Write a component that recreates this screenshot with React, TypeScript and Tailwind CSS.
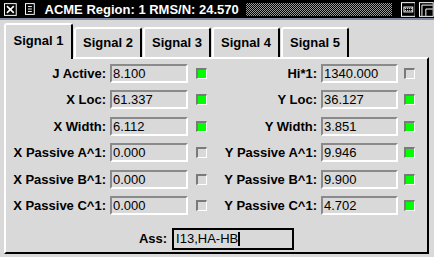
const leftRows = [
  { label: 'J Active:', value: '8.100', on: true },
  { label: 'X Loc:', value: '61.337', on: true },
  { label: 'X Width:', value: '6.112', on: true },
  { label: 'X Passive A^1:', value: '0.000', on: false },
  { label: 'X Passive B^1:', value: '0.000', on: false },
  { label: 'X Passive C^1:', value: '0.000', on: false },
];

const rightRows = [
  { label: 'Hi*1:', value: '1340.000', on: false },
  { label: 'Y Loc:', value: '36.127', on: true },
  { label: 'Y Width:', value: '3.851', on: true },
  { label: 'Y Passive A^1:', value: '9.946', on: true },
  { label: 'Y Passive B^1:', value: '9.900', on: true },
  { label: 'Y Passive C^1:', value: '4.702', on: true },
];

const tabs = ['Signal 1', 'Signal 2', 'Signal 3', 'Signal 4', 'Signal 5'];

const Check = ({ on }: { on: boolean }) => (
  <div className="w-[11px] h-[11px] border-t-2 border-l-2 border-b border-r border-t-[#7a7a7a] border-l-[#7a7a7a] border-b-white border-r-white">
    <div className={on ? 'w-full h-full bg-[#00ff00]' : 'w-full h-full bg-[#d9d9d9]'} />
  </div>
);

const Field = ({ value, w }: { value: string; w: string }) => (
  <div
    className={`${w} h-[19px] border-t-2 border-l-2 border-b-2 border-r-2 border-t-[#8a8a8a] border-l-[#8a8a8a] border-b-white border-r-white pl-[1px] flex items-center text-[13px] leading-none`}
  >
    {value}
  </div>
);

const Column = ({
  rows,
  labelW,
  fieldW,
  gap,
}: {
  rows: { label: string; value: string; on: boolean }[];
  labelW: string;
  fieldW: string;
  gap: string;
}) => (
  <div className="flex flex-col gap-y-[7.4px]">
    {rows.map((r) => (
      <div key={r.label} className="flex items-center h-[19px]">
        <div className={`${labelW} text-right font-bold text-[13px] leading-none pr-[4px]`}>{r.label}</div>
        <Field value={r.value} w={fieldW} />
        <div className={gap} />
        <Check on={r.on} />
      </div>
    ))}
  </div>
);

export default function App() {
  return (
    <div
      className="w-[434px] h-[257px] bg-[#d9d9d9] overflow-hidden flex flex-col text-black"
      style={{ fontFamily: '"Liberation Sans", Arial, sans-serif' }}
    >
      {/* title bar */}
      <div className="h-[20px] bg-black border-b-2 border-[#7d8ea4] flex items-center shrink-0">
        <svg width="13" height="13" viewBox="0 0 13 13" className="ml-[4px]">
          <rect x="0.5" y="0.5" width="12" height="12" fill="none" stroke="#fff" />
          <path d="M3 3 L10 10 M10 3 L3 10" stroke="#fff" strokeWidth="1.6" />
        </svg>
        <svg width="10" height="12" viewBox="0 0 10 12" className="ml-[8px]">
          <rect x="0.5" y="0.5" width="9" height="11" fill="none" stroke="#fff" />
          <path d="M3 3.5 H7 M3 6 H7 M3 8.5 H7" stroke="#fff" />
        </svg>
        <div className="ml-[10px] text-white font-bold text-[13px] leading-none whitespace-nowrap">
          ACME Region: 1 RMS/N: 24.570
        </div>
        <div className="ml-[7px] w-[149px] h-[13px] bg-[repeating-conic-gradient(#9a9a9a_0%_25%,#000_0%_50%)] bg-[length:2px_2px]" />
        <svg width="15" height="15" viewBox="0 0 15 15" className="ml-[9px]">
          <rect x="0.5" y="0.5" width="14" height="14" fill="none" stroke="#fff" />
          <rect x="3" y="5" width="9" height="5" fill="none" stroke="#fff" />
          <path d="M4 6.5 H11 M4 8.5 H11" stroke="#fff" strokeDasharray="1 1" />
        </svg>
        <svg width="15" height="15" viewBox="0 0 15 15" className="ml-[4px]">
          <rect x="0.5" y="0.5" width="14" height="14" fill="none" stroke="#fff" />
          <path d="M3 14 V3 H14" fill="none" stroke="#fff" />
          <path d="M7 14 V7 H14" fill="none" stroke="#fff" />
        </svg>
      </div>

      <div className="pl-[4px] pr-[5px] flex flex-col">
        {/* tabs */}
        <div className="flex items-end mt-[3px] gap-x-[1px] relative z-10">
          {tabs.map((t, i) =>
            i === 0 ? (
              <div
                key={t}
                className="w-[69px] h-[36px] bg-[#d9d9d9] border-l-2 border-t-2 border-r-2 border-l-white border-t-white border-r-black rounded-t-[3px] flex items-center justify-center font-bold text-[13px] -mb-[2px] pb-[3px]"
              >
                {t}
              </div>
            ) : (
              <div
                key={t}
                className="w-[68px] h-[30px] border-l-2 border-t-2 border-r-2 border-l-white border-t-white border-r-black rounded-t-[3px] flex items-center justify-center font-bold text-[13px]"
              >
                {t}
              </div>
            )
          )}
        </div>

        {/* panel */}
        <div className="h-[197px] border-2 border-t-white border-l-white border-r-black border-b-black flex flex-col">
          <div className="flex pt-[5px]">
            <Column rows={leftRows} labelW="w-[104px]" fieldW="w-[78px]" gap="w-[8px]" />
            <Column rows={rightRows} labelW="w-[114px]" fieldW="w-[77px]" gap="w-[6px]" />
          </div>
          <div className="flex items-center justify-center mt-[13px]">
            <div className="font-bold text-[13px] leading-none pr-[5px]">Ass:</div>
            <div className="w-[122px] h-[22px] border-2 border-black pl-[2px] flex items-center text-[13px] leading-none">
              I13,HA-HB
              <span className="w-[2px] h-[14px] bg-black" />
            </div>
          </div>
        </div>
      </div>
    </div>
  );
}
